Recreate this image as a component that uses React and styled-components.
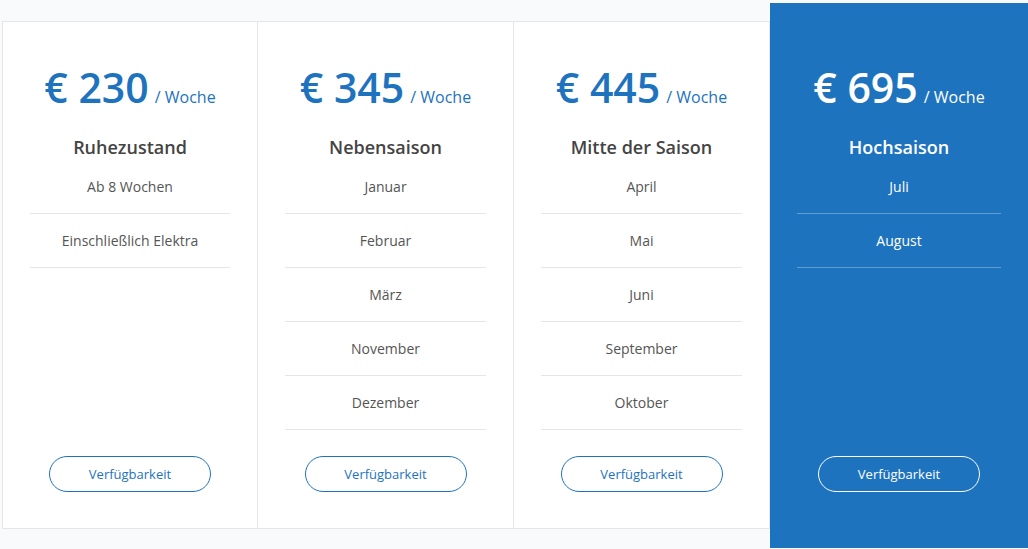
import React from "react";
import styled, { createGlobalStyle, css } from "styled-components";

const Global = createGlobalStyle`
  html, body { margin: 0; padding: 0; background: #f9fafc; }
  body { font-family: "Open Sans", "Noto Sans", sans-serif; }
`;

const Page = styled.div`
  width: 1028px;
  height: 549px;
  overflow: hidden;
  padding: 21px 0 0 2px;
  box-sizing: border-box;
`;

const Grid = styled.div`
  display: grid;
  grid-template-columns: 256px 256px 256px 1fr;
  width: 1026px;
  align-items: stretch;
`;

const Card = styled.div`
  display: flex;
  flex-direction: column;
  align-items: center;
  box-sizing: border-box;
  background: #fff;
  border-top: 1px solid #e6e6e6;
  border-bottom: 1px solid #e6e6e6;
  border-right: 1px solid #e6e6e6;
  border-left: ${(p) => (p.$first ? "1px solid #e6e6e6" : "none")};
  padding: 41px 27px 36px;
  color: #555;
  ${(p) =>
    p.$featured &&
    css`
      background: #1e73be;
      border: none;
      margin: -18px 0 -19px;
      padding: 60px 27px 56px;
      color: #fff;
    `}
`;

const Price = styled.div`
  display: flex;
  align-items: baseline;
  line-height: 48px;
  height: 48px;
  color: ${(p) => (p.$featured ? "#fff" : "#1e73be")};
`;

const Amount = styled.span`
  font-size: 41px;
  font-weight: 600;
`;

const Per = styled.span`
  font-size: 16px;
  margin-left: 6px;
`;

const Title = styled.h3`
  margin: 24px 0 1px;
  font-size: 18px;
  line-height: 24px;
  font-weight: 600;
  color: ${(p) => (p.$featured ? "#fff" : "#444")};
`;

const List = styled.ul`
  list-style: none;
  margin: 0;
  padding: 0;
  width: 100%;
`;

const Item = styled.li`
  font-size: 14px;
  line-height: 21px;
  padding: 16px 0;
  text-align: center;
  border-bottom: 1px solid
    ${(p) => (p.$featured ? "rgba(255,255,255,0.3)" : "#e6e6e6")};
  color: ${(p) => (p.$featured ? "#fff" : "#555")};
`;

const Button = styled.button`
  margin-top: auto;
  width: 162px;
  height: 36px;
  border-radius: 18px;
  background: transparent;
  border: 1px solid ${(p) => (p.$featured ? "#fff" : "#1e73be")};
  color: ${(p) => (p.$featured ? "#fff" : "#1e73be")};
  font-family: "Open Sans", "Noto Sans", sans-serif;
  font-size: 13px;
  cursor: pointer;
  flex-shrink: 0;
`;

const Spacer = styled.div`
  flex: 1;
  min-height: 26px;
`;

const plans = [
  { price: "230", title: "Ruhezustand", items: ["Ab 8 Wochen", "Einschließlich Elektra"] },
  { price: "345", title: "Nebensaison", items: ["Januar", "Februar", "März", "November", "Dezember"] },
  { price: "445", title: "Mitte der Saison", items: ["April", "Mai", "Juni", "September", "Oktober"] },
  { price: "695", title: "Hochsaison", items: ["Juli", "August"], featured: true },
];

export default function App() {
  return (
    <>
      <Global />
      <Page>
        <Grid>
          {plans.map((p, i) => (
            <Card key={p.title} $first={i === 0} $featured={p.featured}>
              <Price $featured={p.featured}>
                <Amount>€ {p.price}</Amount>
                <Per>/ Woche</Per>
              </Price>
              <Title $featured={p.featured}>{p.title}</Title>
              <List>
                {p.items.map((it) => (
                  <Item key={it} $featured={p.featured}>
                    {it}
                  </Item>
                ))}
              </List>
              <Spacer />
              <Button $featured={p.featured}>Verfügbarkeit</Button>
            </Card>
          ))}
        </Grid>
      </Page>
    </>
  );
}
